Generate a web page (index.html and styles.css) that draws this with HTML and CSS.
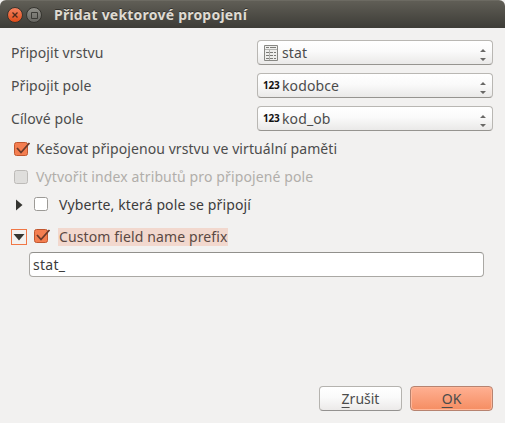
FILE: index.html
```html
<!DOCTYPE html>
<html lang="cs">
<head>
<meta charset="utf-8">
<title>Přidat vektorové propojení</title>
<link rel="stylesheet" href="styles.css">
</head>
<body>
<div class="dialog">
  <header class="titlebar">
    <svg class="winbtn" width="16" height="16" viewBox="0 0 16 16"><defs><linearGradient id="c" x2="0" y2="1"><stop stop-color="#f58462"/><stop offset="1" stop-color="#df4a16"/></linearGradient></defs><circle cx="8" cy="8" r="7.5" fill="url(#c)" stroke="#34332e"/><path d="M5.500 5.500l5 5M10.500 5.500l-5 5" stroke="#4b2a1d" stroke-width="1.3"/></svg>
    <svg class="winbtn" width="16" height="16" viewBox="0 0 16 16"><defs><linearGradient id="m" x2="0" y2="1"><stop stop-color="#92918b"/><stop offset="1" stop-color="#65645f"/></linearGradient></defs><circle cx="8" cy="8" r="7.5" fill="url(#m)" stroke="#34332e"/><path d="M5.500 5.500h6v6h-6z" fill="none" stroke="#3b3a36"/></svg>
    <h1 class="title">Přidat vektorové propojení</h1>
  </header>
  <main class="content">
    <div class="row"><span>Připojit vrstvu</span>
      <div class="combo"><svg class="table" width="14" height="16" viewBox="0 0 14 16"><path d="M.5.5h13v15H.5z" fill="#eeeeec" stroke="#888884"/><path d="M1 4.500h12M5.500 4v11" stroke="#b5b5b2"/><path d="M2 2.500h3M6 2.500h6M2 7.500h3M6 7.500h3M10 7.500h2M2 10.500h3M6 10.500h3M10 10.500h2M2 13.500h3M6 13.500h3M10 13.500h2" stroke="#7c7c78"/></svg><span class="value">stat</span><svg class="arrows" width="6" height="12" viewBox="0 0 6 12"><path d="M0 3L3 0l3 3zM0 9h6l-3 3z" fill="#696866"/></svg></div>
    </div>
    <div class="row"><span>Připojit pole</span>
      <div class="combo"><b class="num">123</b><span class="value">kodobce</span><svg class="arrows" width="6" height="12" viewBox="0 0 6 12"><path d="M0 3L3 0l3 3zM0 9h6l-3 3z" fill="#696866"/></svg></div>
    </div>
    <div class="row"><span>Cílové pole</span>
      <div class="combo"><b class="num">123</b><span class="value">kod_ob</span><svg class="arrows" width="6" height="12" viewBox="0 0 6 12"><path d="M0 3L3 0l3 3zM0 9h6l-3 3z" fill="#696866"/></svg></div>
    </div>
    <div class="option"><svg class="box" width="17" height="16" viewBox="0 0 17 16"><rect x=".5" y="1.500" width="13" height="13" rx="2" fill="#f47e50" stroke="#c0562e"/><path d="M3 7l4 4.500L15.500 2" fill="none" stroke="#6b3a2a" stroke-width="1.8"/></svg><span>Kešovat připojenou vrstvu ve virtuální paměti</span></div>
    <div class="option disabled"><svg class="box" width="17" height="16" viewBox="0 0 17 16"><rect x=".5" y="1.500" width="13" height="13" rx="2" fill="#dfdedc" stroke="#bdbbb8"/></svg><span>Vytvořit index atributů pro připojené pole</span></div>
    <div class="group"><span class="expander"><svg width="14" height="14" viewBox="0 0 14 14"><path d="M4 1.500L10.500 7l-6.500 5.500z" fill="#353531"/></svg></span><svg class="box" width="17" height="16" viewBox="0 0 17 16"><rect x=".5" y=".5" width="13" height="13" rx="2" fill="#fff" stroke="#9c9a96"/></svg><span class="label">Vyberte, která pole se připojí</span></div>
    <div class="group open"><span class="expander focus"><svg width="14" height="14" viewBox="0 0 14 14"><path d="M1.500 4h11L7 10.500z" fill="#353531"/></svg></span><svg class="box" width="17" height="16" viewBox="0 0 17 16"><rect x=".5" y=".5" width="13" height="13" rx="2" fill="#f47e50" stroke="#c0562e"/><path d="M3 6l4 4.500L15.500 1" fill="none" stroke="#6b3a2a" stroke-width="1.8"/></svg><span class="label highlight">Custom field name prefix</span></div>
    <div class="field">stat_</div>
    <footer class="buttons">
      <button class="button"><span class="key">Z</span>rušit</button>
      <button class="button primary"><span class="key">O</span>K</button>
    </footer>
  </main>
</div>
</body>
</html>
```
FILE: styles.css
```css
* { box-sizing: border-box; }
body { margin: 0; background: #f2f1f0; font: 14px/20px "Noto Sans", "Open Sans", sans-serif; letter-spacing: .08px; color: #4c4c4c; white-space: nowrap; }
.dialog { width: 505px; height: 423px; display: flex; flex-direction: column; background: #f2f1f0; border-radius: 6px 6px 0 0; overflow: hidden; }
.titlebar { height: 28px; flex: none; display: flex; align-items: center; gap: 3px; padding: 1px 0 0 7px; background: linear-gradient(#605e56, #3d3c37); border-top: 1px solid #6c6a62; }
.winbtn { display: block; }
.title { margin: 0 0 0 9px; font-size: 14px; line-height: 20px; font-weight: 700; letter-spacing: .22px; color: #dfdbd2; text-shadow: 0 -1px #33322e; }
.content { flex: 1; display: flex; flex-direction: column; padding: 12px 12px 12px 11px; }
.row { display: flex; align-items: center; justify-content: space-between; height: 25px; margin-bottom: 8px; }
.combo { width: 236px; height: 25px; display: flex; align-items: center; padding: 0 6px 0 5px; border: 1px solid #b9b7b3; border-bottom-color: #969490; border-radius: 4px; background: linear-gradient(#fff, #fafafa 45%, #eae9e8); }
.value { letter-spacing: .12px; }
.table { margin: 0 4px 0 1px; }
.num { width: 19px; font: 700 10px/16px "Noto Sans", sans-serif; letter-spacing: -.2px; color: #111; padding-bottom: 1px; }
.arrows { margin: 4px 0 0 auto; }
.option { display: flex; align-items: center; height: 20px; padding-left: 3px; margin-bottom: 8px; }
.box { flex: none; }
.option .box { margin-right: 5px; }
.disabled { color: #b1aeaa; letter-spacing: .12px; }
.group { display: flex; align-items: center; height: 20px; color: #3c3c3c; letter-spacing: .12px; }
.open { margin-top: 12px; color: #4c4c4c; }
.expander { width: 16px; height: 16px; display: flex; align-items: center; justify-content: center; margin-right: 7px; flex: none; }
.focus { border: 1px solid #f07746; }
.group .box { margin-right: 7px; }
.label { line-height: 18px; padding: 0 0 0 1px; }
.highlight { background: #f2d8ce; color: #5a4843; }
.field { width: 455px; height: 25px; margin: 5px 0 0 18px; padding: 0 3px; line-height: 24px; letter-spacing: .3px; color: #3c3c3c; background: #fff; border: 1px solid #aaa8a4; border-radius: 4px; border-top-color: #91908c; }
.buttons { display: flex; justify-content: flex-end; gap: 8px; margin-top: auto; }
.button { width: 83px; height: 25px; padding: 0; border: 1px solid #b5b3af; border-bottom-color: #949290; border-radius: 4px; background: linear-gradient(#fff, #fafafa 45%, #eceae9); color: #4c4c4c; font: inherit; line-height: 22px; }
.primary { border-color: #b78370; background: linear-gradient(#ffb092, #f58d62); box-shadow: inset 0 0 0 1px #ffb799; }
.key { text-decoration: underline; text-underline-offset: 3px; text-decoration-thickness: 1px; }
```
